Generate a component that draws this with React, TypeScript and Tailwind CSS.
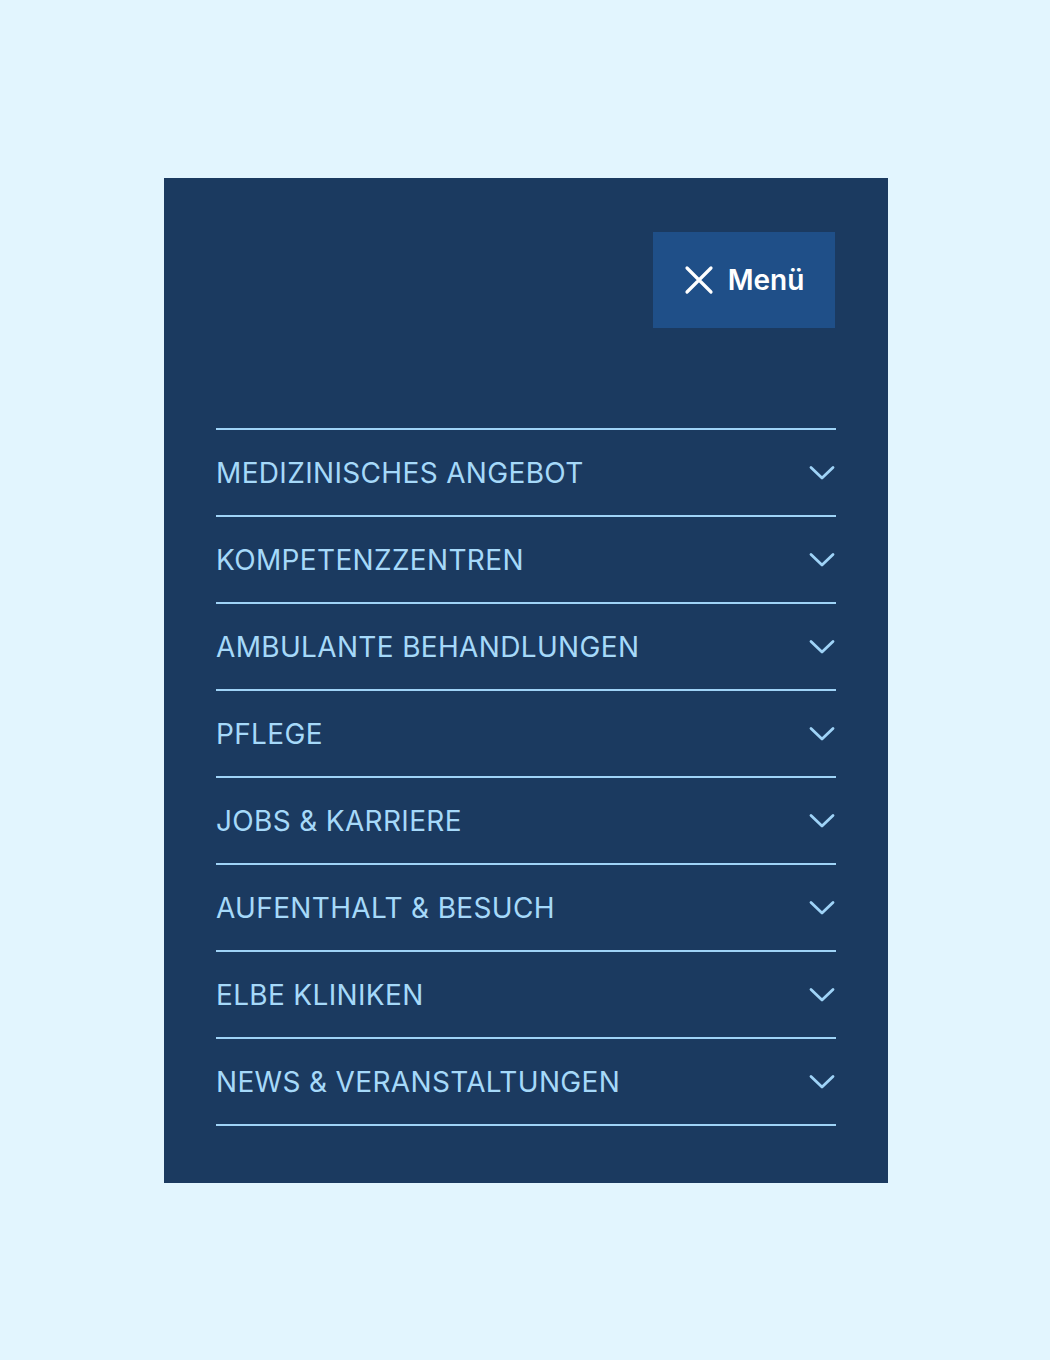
const items = [
  "MEDIZINISCHES ANGEBOT",
  "KOMPETENZZENTREN",
  "AMBULANTE BEHANDLUNGEN",
  "PFLEGE",
  "JOBS & KARRIERE",
  "AUFENTHALT & BESUCH",
  "ELBE KLINIKEN",
  "NEWS & VERANSTALTUNGEN",
];

function ChevronDown() {
  return (
    <svg width="28" height="16" viewBox="0 0 28 16" fill="none" className="shrink-0">
      <path d="M3 2.5 L14 13 L25 2.5" stroke="#9fd3f7" strokeWidth="2.8" strokeLinecap="round" strokeLinejoin="round" />
    </svg>
  );
}

function CloseIcon() {
  return (
    <svg width="30" height="30" viewBox="0 0 30 30" fill="none">
      <path d="M3 3 L27 27 M27 3 L3 27" stroke="#ffffff" strokeWidth="3.2" strokeLinecap="round" />
    </svg>
  );
}

export default function App() {
  return (
    <div className="min-h-[1360px] bg-[#e2f5fe] pt-[178px]" style={{ fontFamily: "Inter, 'Noto Sans', sans-serif" }}>
      <nav className="ml-[164px] w-[724px] bg-[#1b3a60] px-[52px] pt-[54px] pb-[57px]">
        <div className="flex justify-end pr-px">
          <button className="flex h-[96px] w-[182px] items-center justify-center gap-[14px] bg-[#1f4f88] text-white">
            <CloseIcon />
            <span className="text-[28px] font-semibold leading-none">Menü</span>
          </button>
        </div>
        <ul className="mt-[100px] border-t-2 border-[#9fd3f7]">
          {items.map((label) => (
            <li
              key={label}
              className="flex h-[87px] items-center justify-between border-b-2 border-[#9fd3f7] text-[#a6d9f9]"
            >
              <span className="text-[28px] leading-none tracking-[0.012em]">{label}</span>
              <ChevronDown />
            </li>
          ))}
        </ul>
      </nav>
    </div>
  );
}
